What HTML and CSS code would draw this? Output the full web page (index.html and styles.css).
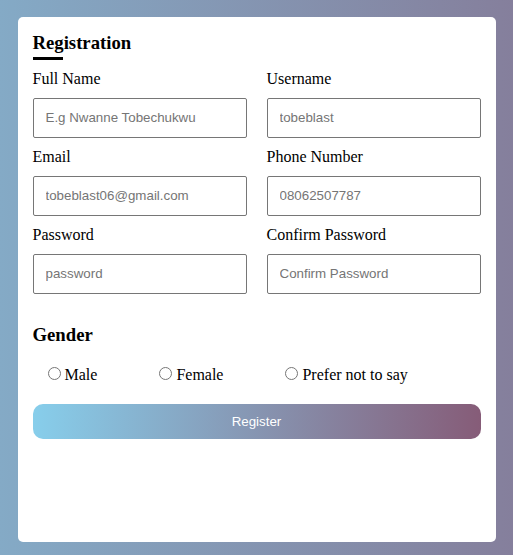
FILE: index.html
```html
<!DOCTYPE html>
<html lang="en">
<head>
<meta charset="utf-8">
<title>Registration</title>
<link rel="stylesheet" href="styles.css">
</head>
<body>
<div class="card">
  <h3 class="title">Registration</h3>
  <div class="title-bar"></div>
  <form class="form">
    <div class="grid">
      <div class="field">
        <label class="label">Full Name</label>
        <input class="input" type="text" placeholder="E.g Nwanne Tobechukwu">
      </div>
      <div class="field">
        <label class="label">Username</label>
        <input class="input" type="text" placeholder="tobeblast">
      </div>
      <div class="field">
        <label class="label">Email</label>
        <input class="input" type="text" placeholder="tobeblast06@gmail.com">
      </div>
      <div class="field">
        <label class="label">Phone Number</label>
        <input class="input" type="text" placeholder="08062507787">
      </div>
      <div class="field">
        <label class="label">Password</label>
        <input class="input" type="password" placeholder="password">
      </div>
      <div class="field">
        <label class="label">Confirm Password</label>
        <input class="input" type="password" placeholder="Confirm Password">
      </div>
    </div>
    <h3 class="gender-title">Gender</h3>
    <div class="radios">
      <label class="radio-label"><input class="radio" type="radio" name="gender">Male</label>
      <label class="radio-label"><input class="radio" type="radio" name="gender">Female</label>
      <label class="radio-label"><input class="radio" type="radio" name="gender">Prefer not to say</label>
    </div>
    <button class="btn" type="button">Register</button>
  </form>
</div>
</body>
</html>
```
FILE: styles.css
```css
html, body {
  margin: 0;
}
body {
  min-height: 555px;
  box-sizing: border-box;
  padding-top: 17px;
  background: linear-gradient(to right, #84aac6, #857f9c);
  font-family: "Liberation Serif", "Times New Roman", serif;
  color: #000;
}
.card {
  width: 478px;
  height: 525px;
  box-sizing: border-box;
  margin: 0 auto;
  padding: 15px;
  background: #fff;
  border-radius: 5px;
}
.title {
  margin: 0;
  font-size: 18.72px;
  font-weight: bold;
}
.title-bar {
  width: 30px;
  height: 3px;
  background: #000;
  margin-top: 2.5px;
  margin-bottom: 10px;
}
.form {
  margin: 0;
}
.grid {
  display: grid;
  grid-template-columns: 1fr 1fr;
  column-gap: 20px;
  row-gap: 10px;
}
.field {
  display: flex;
  flex-direction: column;
}
.label {
  display: block;
  font-size: 16px;
  margin-bottom: 10px;
}
.input {
  display: block;
  width: 100%;
  height: 40px;
  box-sizing: border-box;
  border: 1px solid #767676;
  border-radius: 2px;
  padding: 0 12px;
  font-family: "Liberation Sans", Arial, sans-serif;
  font-size: 13.333px;
  color: #000;
  background: #fff;
}
.input::placeholder {
  color: #757575;
}
.gender-title {
  margin: 30px 0 0;
  font-size: 18.72px;
  font-weight: bold;
}
.radios {
  display: flex;
  gap: 57px;
  margin-top: 18px;
  padding-left: 10px;
  font-size: 16px;
}
.radio-label {
  display: block;
}
.radio {
  width: 13px;
  height: 13px;
  margin: 3px 4px 0 5px;
}
.btn {
  display: block;
  width: 100%;
  height: 35px;
  margin-top: 20px;
  border: none;
  border-radius: 10px;
  background: linear-gradient(to right, #87ceeb, #865c78);
  color: #fff;
  font-family: "Liberation Sans", Arial, sans-serif;
  font-size: 13.333px;
}
```
